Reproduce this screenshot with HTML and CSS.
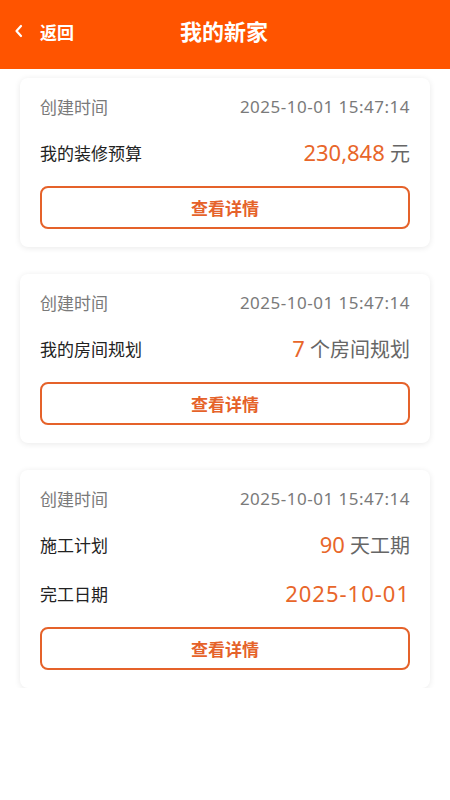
FILE: index.html
```html
<!DOCTYPE html>
<html>
  <head>
    <meta charset="UTF-8">
    <meta name="viewport" content="width=device-width, initial-scale=1">
    <title>我的新家</title>
    <link rel="stylesheet" href="styles.css">
  </head>
  <body>
    <header class="topbar">
      <a class="back">
        <svg class="back-icon" width="10" height="14" viewBox="0 0 10 14">
          <path d="M7 2 L2.5 7 L7 12" fill="none" stroke="#fff" stroke-width="2.2" stroke-linecap="round" stroke-linejoin="round"/>
        </svg>
        <span>返回</span>
      </a>
      <h1>我的新家</h1>
      <span></span>
    </header>

    <main class="list">
      <section class="card">
        <div class="row row-meta">
          <span>创建时间</span>
          <span class="num">2025-10-01 15:47:14</span>
        </div>
        <div class="row">
          <span class="label">我的装修预算</span>
          <span class="value"><b>230,848</b> 元</span>
        </div>
        <button type="button" class="detail">查看详情</button>
      </section>

      <section class="card">
        <div class="row row-meta">
          <span>创建时间</span>
          <span class="num">2025-10-01 15:47:14</span>
        </div>
        <div class="row">
          <span class="label">我的房间规划</span>
          <span class="value"><b>7</b> 个房间规划</span>
        </div>
        <button type="button" class="detail">查看详情</button>
      </section>

      <section class="card">
        <div class="row row-meta">
          <span>创建时间</span>
          <span class="num">2025-10-01 15:47:14</span>
        </div>
        <div class="row">
          <span class="label">施工计划</span>
          <span class="value"><b>90</b> 天工期</span>
        </div>
        <div class="row">
          <span class="label">完工日期</span>
          <span class="value"><b class="wide">2025-10-01</b></span>
        </div>
        <button type="button" class="detail">查看详情</button>
      </section>
    </main>
  </body>
</html>
```

FILE: styles.css
```css
body {
  margin: 0;
  background: #fff;
  font-family: "Noto Sans", "Noto Sans CJK SC", sans-serif;
  color: #222;
}

.topbar {
  height: 69px;
  box-sizing: border-box;
  padding: 17px 16px 0 14px;
  background: #ff5400;
  color: #fff;
  display: grid;
  grid-template-columns: 1fr auto 1fr;
  align-items: start;
}

.back {
  display: flex;
  align-items: center;
  gap: 16px;
  height: 28px;
  font-size: 17px;
  font-weight: 700;
}

.topbar h1 {
  margin: 0;
  font-size: 22px;
  line-height: 28px;
  font-weight: 700;
}

.list {
  padding: 9px 20px 0;
  display: flex;
  flex-direction: column;
  gap: 27px;
}

.card {
  background: #fff;
  border-radius: 8px;
  box-shadow: 0 1px 6px rgba(0, 0, 0, 0.09);
  padding: 16px 20px 18px;
  display: flex;
  flex-direction: column;
  gap: 19px;
}

.row {
  display: flex;
  justify-content: space-between;
  align-items: center;
  height: 30px;
  font-size: 17px;
}

.row-meta {
  height: 24px;
  color: #7a7a7a;
}

.num {
  letter-spacing: 0.5px;
}

.value {
  color: #666;
  font-size: 20px;
}

.value b {
  font-weight: 400;
  font-size: 22px;
  color: #e8662a;
}

.value b.wide {
  letter-spacing: 1px;
}

.detail {
  height: 43px;
  border: 2px solid #e5622a;
  border-radius: 8px;
  background: #fff;
  color: #e5622a;
  font-family: inherit;
  font-size: 17px;
  font-weight: 700;
}
```
